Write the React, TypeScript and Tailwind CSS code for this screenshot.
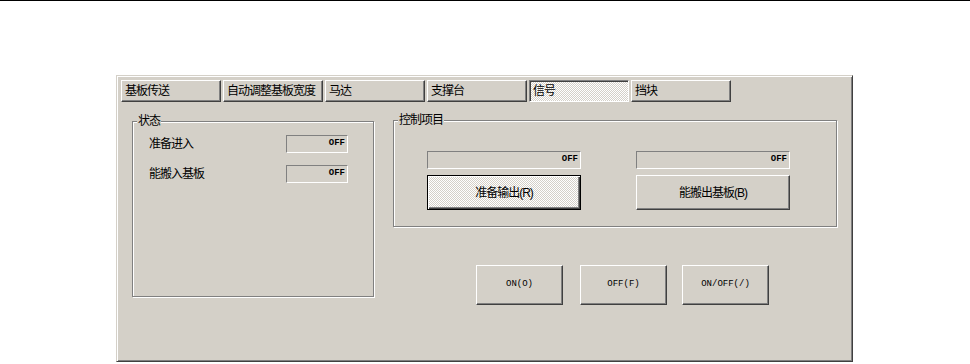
import React from "react";

const cjk =
  "font-['Liberation_Sans','Noto_Sans_CJK_SC',sans-serif] text-[12px] tracking-[-1px] text-black whitespace-nowrap";
const mono = "font-['Liberation_Mono',monospace] text-[9px] text-black whitespace-nowrap";
const raised =
  "border border-t-white border-l-white border-r-[#404040] border-b-[#404040] shadow-[inset_-1px_-1px_0_#808080] bg-[#d4d0c8]";
const sunken =
  "border border-t-[#808080] border-l-[#808080] border-r-white border-b-white bg-[#d4d0c8]";
const checker =
  "bg-[repeating-conic-gradient(#ffffff_0%_25%,#d4d0c8_0%_50%)] bg-[length:2px_2px]";

const tabs = ["基板传送", "自动调整基板宽度", "马达", "支撑台", "信号", "挡块"];

function Tab({ label, active }: { label: string; active?: boolean }) {
  return (
    <div
      className={`w-[100px] h-[22px] flex items-center pl-[3px] ${cjk} ${
        active
          ? `border border-t-[#808080] border-l-[#808080] border-r-white border-b-white shadow-[inset_1px_1px_0_#404040] ${checker}`
          : raised
      }`}
    >
      {label}
    </div>
  );
}

function StatusBox({ className }: { className: string }) {
  return (
    <div className={`${sunken} ${className} flex justify-end items-start pr-[2px] pt-[2px]`}>
      <span className={`${mono} font-bold leading-[10px]`}>OFF</span>
    </div>
  );
}

function Group({
  label,
  className,
  children,
}: {
  label: string;
  className: string;
  children?: React.ReactNode;
}) {
  return (
    <div
      className={`relative border border-[#808080] shadow-[1px_1px_0_#ffffff,inset_1px_1px_0_#ffffff] ${className}`}
    >
      <span
        className={`absolute -top-[8px] left-[4px] px-[1px] bg-[#d4d0c8] leading-[14px] ${cjk}`}
      >
        {label}
      </span>
      {children}
    </div>
  );
}

export default function App() {
  return (
    <div className="w-[970px] h-[364px] bg-white overflow-hidden">
      <div className="h-[1px] bg-black w-full" />
      <div className="ml-[116px] mt-[74px] w-[737px] h-[287px] bg-[#d4d0c8] border border-t-[#d4d0c8] border-l-[#d4d0c8] border-r-[#404040] border-b-[#404040] shadow-[inset_1px_1px_0_#ffffff,inset_-1px_-1px_0_#808080] pt-[4px] pl-[4px]">
        <div className="flex gap-[2px]">
          {tabs.map((t) => (
            <Tab key={t} label={t} active={t === "信号"} />
          ))}
        </div>
        <div className="flex items-start pl-[11px]">
          <Group label="状态" className="mt-[19px] w-[242px] h-[176px] pt-[13px] pl-[16px]">
            <div className="flex flex-col gap-[12px]">
              <div className="flex items-center h-[18px]">
                <span className={`w-[137px] ${cjk}`}>准备进入</span>
                <StatusBox className="w-[62px] h-[18px]" />
              </div>
              <div className="flex items-center h-[18px]">
                <span className={`w-[137px] ${cjk}`}>能搬入基板</span>
                <StatusBox className="w-[62px] h-[18px]" />
              </div>
            </div>
          </Group>
          <div className="ml-[19px] mt-[18px] flex flex-col">
            <Group label="控制项目" className="w-[444px] h-[107px] pt-[30px] pl-[33px]">
              <div className="grid grid-cols-[154px_154px] gap-x-[55px] gap-y-[6px]">
                <StatusBox className="h-[18px]" />
                <StatusBox className="h-[18px]" />
                <div
                  className={`h-[35px] flex items-center justify-center border border-black shadow-[inset_1px_1px_0_#ffffff,inset_-1px_-1px_0_#404040,inset_-2px_-2px_0_#808080] ${checker} ${cjk}`}
                >
                  准备输出(R)
                </div>
                <div className={`h-[35px] flex items-center justify-center ${raised} ${cjk}`}>
                  能搬出基板(B)
                </div>
              </div>
            </Group>
            <div className="flex mt-[38px] ml-[83px]">
              <div className={`w-[87px] h-[40px] flex items-center justify-center ${raised} ${mono}`}>
                ON(O)
              </div>
              <div
                className={`ml-[17px] w-[87px] h-[40px] flex items-center justify-center ${raised} ${mono}`}
              >
                OFF(F)
              </div>
              <div
                className={`ml-[15px] w-[87px] h-[40px] flex items-center justify-center ${raised} ${mono}`}
              >
                ON/OFF(/)
              </div>
            </div>
          </div>
        </div>
      </div>
    </div>
  );
}
